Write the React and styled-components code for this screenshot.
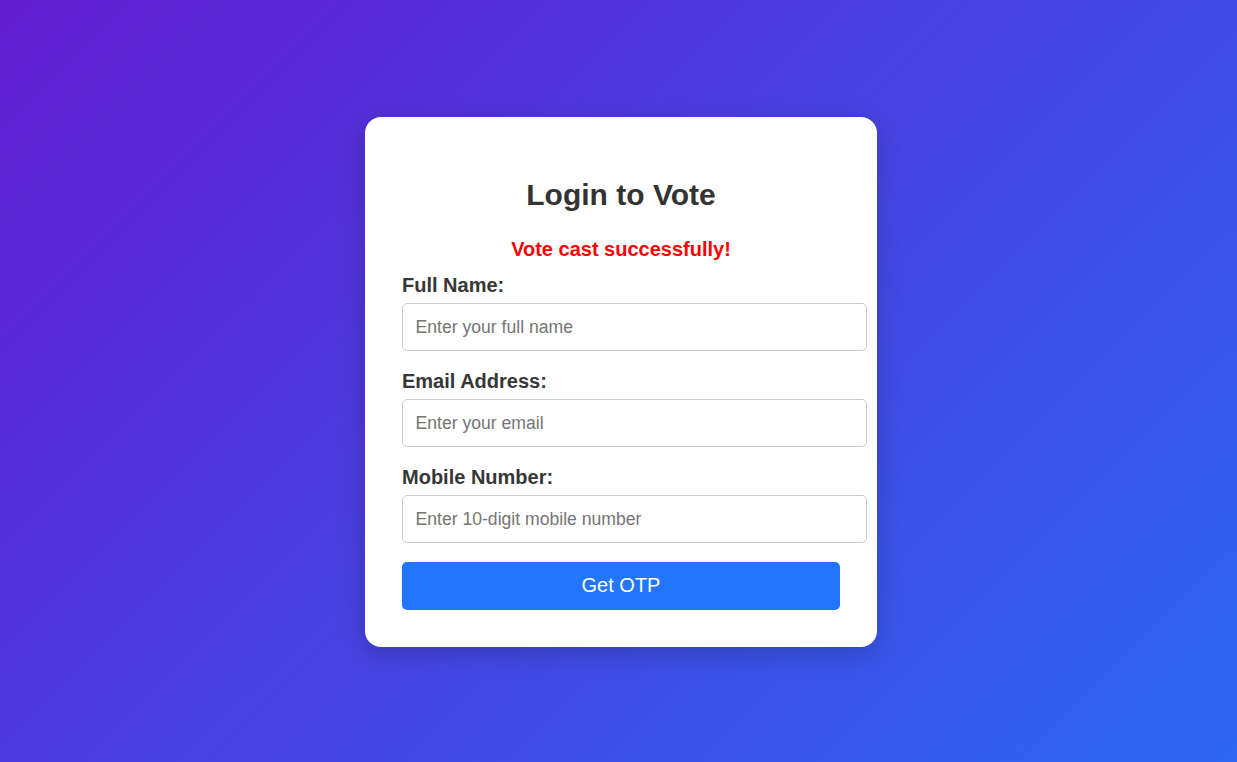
import React from "react";
import styled, { createGlobalStyle } from "styled-components";

const GlobalStyle = createGlobalStyle`
  html, body {
    margin: 0;
    padding: 0;
  }
  body {
    font-family: "Liberation Sans", Arial, sans-serif;
    background: linear-gradient(135deg, #611dcf 0%, #2d67f2 100%);
    min-height: 100vh;
  }
`;

const Page = styled.div`
  min-height: 100vh;
  display: flex;
  align-items: center;
  justify-content: center;
  padding: 2px 0 0 5px;
  box-sizing: border-box;
`;

const Card = styled.div`
  width: 438px;
  padding: 37px;
  background: #fff;
  border-radius: 16px;
  box-shadow: 0 8px 24px rgba(0, 0, 0, 0.18);
`;

const Title = styled.h2`
  margin: 24px 0 0;
  font-size: 30px;
  line-height: 34px;
  font-weight: bold;
  color: #333;
  text-align: center;
`;

const Message = styled.p`
  margin: 26px 0 0;
  font-size: 20px;
  line-height: 23px;
  font-weight: bold;
  color: #ff0000;
  text-align: center;
`;

const Form = styled.form`
  margin-top: 13px;
`;

const Label = styled.label`
  display: block;
  margin-bottom: 6px;
  font-size: 20px;
  line-height: 23px;
  font-weight: bold;
  color: #363636;
`;

const Input = styled.input`
  display: block;
  width: 100%;
  margin: 0 0 ${(p) => (p.$last ? 19 : 19.4)}px;
  padding: 12.8px 12.5px;
  font-family: inherit;
  font-size: 17.6px;
  line-height: 20px;
  color: #333;
  border: 1px solid #ccc;
  border-radius: 5px;
  outline: none;

  &::placeholder {
    color: #757575;
  }
`;

const Button = styled.button`
  display: block;
  width: 100%;
  height: 48px;
  margin: 0;
  font-family: inherit;
  font-size: 20px;
  color: #fff;
  background: #2376fc;
  border: none;
  border-radius: 5px;
  cursor: pointer;
`;

const fields = [
  { id: "name", label: "Full Name:", type: "text", placeholder: "Enter your full name" },
  { id: "email", label: "Email Address:", type: "email", placeholder: "Enter your email" },
  { id: "mobile", label: "Mobile Number:", type: "tel", placeholder: "Enter 10-digit mobile number" },
];

function App() {
  return (
    <>
      <GlobalStyle />
      <Page>
        <Card>
          <Title>Login to Vote</Title>
          <Message>Vote cast successfully!</Message>
          <Form onSubmit={(e) => e.preventDefault()}>
            {fields.map((f, i) => (
              <div key={f.id}>
                <Label htmlFor={f.id}>{f.label}</Label>
                <Input
                  id={f.id}
                  type={f.type}
                  placeholder={f.placeholder}
                  $last={i === fields.length - 1}
                />
              </div>
            ))}
            <Button type="submit">Get OTP</Button>
          </Form>
        </Card>
      </Page>
    </>
  );
}

export default App;
